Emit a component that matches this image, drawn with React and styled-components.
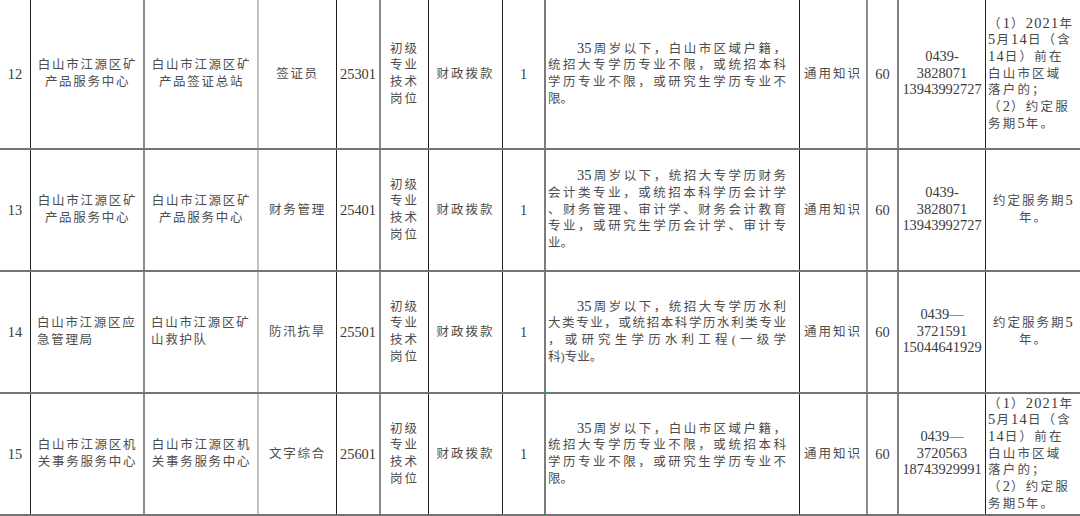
import React from 'react';
import styled, { createGlobalStyle } from 'styled-components';

const GlobalStyle = createGlobalStyle`
  html, body { margin: 0; padding: 0; background: #fff; overflow: hidden; }
  #root { width: 1080px; height: 516px; overflow: hidden; }
`;

const DARK = '#1f1f1f';
const COLS = [
  { w: 31, b: 1, c: DARK },
  { w: 114, b: 2, c: '#8c8c8c' },
  { w: 114, b: 2, c: '#c2c2c2' },
  { w: 78, b: 1, c: DARK },
  { w: 44, b: 2, c: '#888' },
  { w: 48, b: 1, c: DARK },
  { w: 74, b: 1, c: DARK },
  { w: 43, b: 2, c: '#7c7c7c' },
  { w: 254, b: 1, c: DARK },
  { w: 68, b: 2, c: '#8c8c8c' },
  { w: 31, b: 2, c: '#808080' },
  { w: 87, b: 1, c: DARK },
  { w: 95, b: 0, c: 'transparent' },
];

const Sheet = styled.div`
  width: 1081px;
  height: 516px;
  overflow: hidden;
  background: #fff;
  font-family: "Liberation Serif", "Noto Sans CJK SC", serif;
  font-size: 12.5px;
  line-height: 16.7px;
  color: #4d4d4d;
`;

const Row = styled.div`
  display: grid;
  grid-template-columns: ${COLS.map((c) => `${c.w}px`).join(' ')};
  height: ${(p) => p.$h}px;
  box-sizing: border-box;
  border-bottom: 2px solid #747474;
`;

const Cell = styled.div`
  position: relative;
  box-sizing: border-box;
  min-width: 0;
  display: flex;
  flex-direction: column;
  justify-content: center;
  text-align: ${(p) => p.$align || 'center'};
  letter-spacing: ${(p) => (p.$ls ?? 1.7)}px;
  border-right: ${(p) => COLS[p.$col].b}px solid ${(p) => COLS[p.$col].c};
`;

const NameCell = styled(Cell)`
  padding: 0 5px 0 6px;
`;

const NumberCell = styled(Cell)`
  font-size: 14.4px;
  letter-spacing: 0;
  color: #3a3a3a;
`;

const DescCell = styled(Cell)`
  padding: 0 13px 0 2px;
  letter-spacing: 0;
`;

const PhoneCell = styled(Cell)`
  letter-spacing: 0;
`;

const Num = styled.span`
  font-family: "Liberation Serif", serif;
  font-size: 14.4px;
  line-height: 1;
  color: #3a3a3a;
`;

const NoteCell = styled(Cell)`
  padding: ${(p) => (p.$align === 'left' ? '0 0 0 2px' : '0 2px')};
  & ${Num} { letter-spacing: 1.2px; }
`;

const Line = styled.div`
  white-space: nowrap;
`;

const DescLine = styled.div`
  text-align: left;
  text-align-last: ${(p) => (p.$last ? 'left' : 'justify')};
  text-indent: ${(p) => (p.$indent ? '29px' : '0')};
`;

const Flag = styled.span`
  position: absolute;
  left: -2px;
  ${(p) => (p.$bottom ? 'bottom: -3px;' : 'top: -2px;')}
  width: 3px;
  height: 2px;
  background: #2e9b3c;
`;

function Mixed({ text }) {
  const parts = text.split(/(\d+[-—]?)/);
  return parts.map((s, i) =>
    /^\d/.test(s) ? <Num key={i}>{s}</Num> : <React.Fragment key={i}>{s}</React.Fragment>
  );
}

const DESC_A = [
  '35周岁以下，白山市区域户籍，',
  '统招大专学历专业不限，或统招本科',
  '学历专业不限，或研究生学历专业不',
  '限。',
];
const DESC_B = [
  '35周岁以下，统招大专学历财务',
  '会计类专业，或统招本科学历会计学',
  '、财务管理、审计学、财务会计教育',
  '专业，或研究生学历会计学、审计专',
  '业。',
];
const DESC_C = [
  '35周岁以下，统招大专学历水利',
  '大类专业，或统招本科学历水利类专业',
  '，或研究生学历水利工程(一级学',
  '科)专业。',
];
const NOTES_A = ['（1）2021年', '5月14日（含', '14日）前在', '白山市区域', '落户的；', '（2）约定服', '务期5年。'];
const NOTES_B = ['约定服务期5', '年。'];

const ROWS = [
  {
    h: 150, no: '12',
    unit: ['白山市江源区矿', '产品服务中心'], unitAlign: 'center',
    dept: ['白山市江源区矿', '产品签证总站'], deptAlign: 'center',
    post: '签证员', code: '25301', desc: DESC_A,
    phone: ['0439-', '3828071', '13943992727'],
    notes: NOTES_A, notesAlign: 'left',
  },
  {
    h: 122, no: '13',
    unit: ['白山市江源区矿', '产品服务中心'], unitAlign: 'center',
    dept: ['白山市江源区矿', '产品服务中心'], deptAlign: 'center',
    post: '财务管理', code: '25401', desc: DESC_B,
    phone: ['0439-', '3828071', '13943992727'],
    notes: NOTES_B, notesAlign: 'center',
  },
  {
    h: 122, no: '14',
    unit: ['白山市江源区应', '急管理局'], unitAlign: 'left',
    dept: ['白山市江源区矿', '山救护队'], deptAlign: 'left',
    post: '防汛抗旱', code: '25501', desc: DESC_C,
    phone: ['0439—', '3721591', '15044641929'],
    notes: NOTES_B, notesAlign: 'center',
  },
  {
    h: 122, no: '15',
    unit: ['白山市江源区机', '关事务服务中心'], unitAlign: 'center',
    dept: ['白山市江源区机', '关事务服务中心'], deptAlign: 'center',
    post: '文字综合', code: '25601', desc: DESC_A,
    phone: ['0439—', '3720563', '18743929991'],
    notes: NOTES_A, notesAlign: 'left', flag: true,
  },
];

function JobRow({ r }) {
  return (
    <Row $h={r.h}>
      <NumberCell $col={0}>{r.no}</NumberCell>
      <NameCell $col={1} $align={r.unitAlign}>
        {r.unit.map((l) => <Line key={l}>{l}</Line>)}
      </NameCell>
      <NameCell $col={2} $align={r.deptAlign}>
        {r.dept.map((l) => <Line key={l}>{l}</Line>)}
      </NameCell>
      <Cell $col={3}><Line>{r.post}</Line></Cell>
      <NumberCell $col={4}>{r.code}</NumberCell>
      <Cell $col={5} $ls={2}>
        {['初级', '专业', '技术', '岗位'].map((l) => <Line key={l}>{l}</Line>)}
      </Cell>
      <Cell $col={6} $ls={2}><Line>财政拨款</Line></Cell>
      <NumberCell $col={7}>1</NumberCell>
      <DescCell $col={8}>
        {r.flag && <Flag />}
        {r.flag && <Flag $bottom />}
        {r.desc.map((l, i) => (
          <DescLine key={i} $indent={i === 0} $last={i === r.desc.length - 1}>
            <Mixed text={l} />
          </DescLine>
        ))}
      </DescCell>
      <Cell $col={9} $ls={2}><Line>通用知识</Line></Cell>
      <NumberCell $col={10}>60</NumberCell>
      <PhoneCell $col={11}>
        {r.phone.map((l) => <Line key={l}><Num>{l}</Num></Line>)}
      </PhoneCell>
      <NoteCell $col={12} $align={r.notesAlign} $ls={r.notesAlign === 'left' ? 2.2 : 2}>
        {r.notes.map((l) => <Line key={l}><Mixed text={l} /></Line>)}
      </NoteCell>
    </Row>
  );
}

export default function App() {
  return (
    <>
      <GlobalStyle />
      <Sheet>
        {ROWS.map((r) => <JobRow key={r.no} r={r} />)}
      </Sheet>
    </>
  );
}
